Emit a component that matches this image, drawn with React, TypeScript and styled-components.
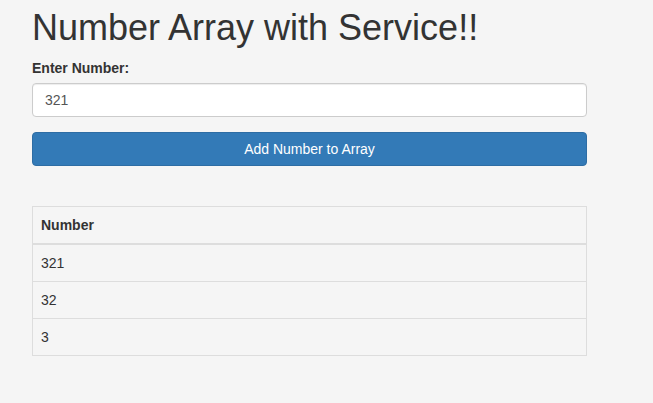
import styled, { createGlobalStyle } from 'styled-components';

const GlobalStyle = createGlobalStyle`
  html, body {
    margin: 0;
    padding: 0;
    background: #f5f5f5;
  }
  body {
    font-family: "Liberation Sans", Arial, Helvetica, sans-serif;
    font-size: 14px;
    line-height: 1.42857143;
    color: #333333;
  }
  * {
    box-sizing: border-box;
  }
`

const Page = styled.div`
  width: 555px;
  margin-left: 32px;
  padding-top: 8px;
`

const Title = styled.h1`
  font-size: 36px;
  font-weight: 500;
  line-height: 1.1;
  margin: 0 0 10px;
  color: #333333;
`

const FormGroup = styled.div`
  margin-bottom: 15px;
`

const Label = styled.label`
  display: inline-block;
  font-weight: bold;
  margin-bottom: 5px;
`

const Input = styled.input`
  display: block;
  width: 100%;
  height: 34px;
  padding: 6px 12px;
  font-family: inherit;
  font-size: 14px;
  line-height: 1.42857143;
  color: #555555;
  background: #ffffff;
  border: 1px solid #cccccc;
  border-radius: 4px;
  box-shadow: inset 0 1px 1px rgba(0, 0, 0, 0.075);
  outline: none;
`

const PrimaryButton = styled.button`
  display: block;
  width: 100%;
  height: 34px;
  padding: 6px 12px;
  font-family: inherit;
  font-size: 14px;
  line-height: 1.42857143;
  color: #ffffff;
  background: #337ab7;
  border: 1px solid #2e6da4;
  border-radius: 4px;
  cursor: pointer;
`

const Table = styled.table`
  width: 100%;
  margin-top: 40px;
  border-collapse: collapse;
  border-spacing: 0;
  border: 1px solid #dddddd;
`

const HeadCell = styled.th`
  text-align: left;
  padding: 8px;
  line-height: 1.42857143;
  border: 1px solid #dddddd;
  border-bottom-width: 2px;
  font-weight: bold;
`

const Cell = styled.td`
  padding: 8px;
  line-height: 1.42857143;
  border: 1px solid #dddddd;
`

const numbers = [321, 32, 3]

export default function App() {
  return (
    <>
      <GlobalStyle />
      <Page>
        <Title>Number Array with Service!!</Title>
        <FormGroup>
          <Label htmlFor="num">Enter Number:</Label>
          <Input id="num" type="text" defaultValue="321" />
        </FormGroup>
        <PrimaryButton>Add Number to Array</PrimaryButton>
        <Table>
          <thead>
            <tr>
              <HeadCell>Number</HeadCell>
            </tr>
          </thead>
          <tbody>
            {numbers.map((n, i) => (
              <tr key={i}>
                <Cell>{n}</Cell>
              </tr>
            ))}
          </tbody>
        </Table>
      </Page>
    </>
  )
}
